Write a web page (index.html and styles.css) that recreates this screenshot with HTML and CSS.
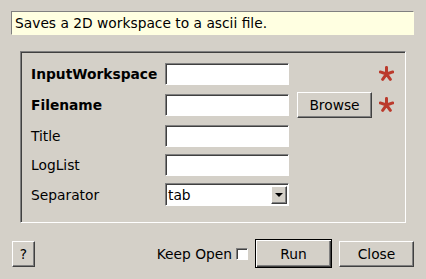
FILE: index.html
```html
<!doctype html>
<html lang="en">
  <head>
    <meta charset="UTF-8" />
    <title>SaveAscii2D</title>
    <link rel="stylesheet" href="styles.css">
  </head>
  <body>
    <div class="dialog">
      <!-- algorithm description -->
      <div class="description">Saves a 2D workspace to a ascii file.</div>

      <!-- properties -->
      <div class="frame">
        <div class="props">
          <div class="prop-label bold">InputWorkspace</div>
          <input class="field" type="text">
          <div></div>
          <div class="star">
            <svg width="16" height="16" viewBox="0 0 16 16"><path d="M8 8L8 1M8 8L14.7 5.8M8 8L12.1 13.7M8 8L3.9 13.7M8 8L1.3 5.8"/></svg>
          </div>

          <div class="prop-label bold">Filename</div>
          <input class="field" type="text">
          <button class="btn browse">Browse</button>
          <div class="star">
            <svg width="16" height="16" viewBox="0 0 16 16"><path d="M8 8L8 1M8 8L14.7 5.8M8 8L12.1 13.7M8 8L3.9 13.7M8 8L1.3 5.8"/></svg>
          </div>

          <div class="prop-label">Title</div>
          <input class="field" type="text">
          <div></div>
          <div></div>

          <div class="prop-label">LogList</div>
          <input class="field" type="text">
          <div></div>
          <div></div>

          <div class="prop-label">Separator</div>
          <div class="combo">
            <span class="combo-text">tab</span>
            <span class="combo-button"><span class="arrow"></span></span>
          </div>
          <div></div>
          <div></div>
        </div>
      </div>

      <!-- buttons -->
      <div class="footer">
        <button class="btn help">?</button>
        <div class="keep-open">
          <span>Keep Open</span>
          <span class="checkbox"></span>
        </div>
        <button class="btn run">Run</button>
        <button class="btn close">Close</button>
      </div>
    </div>
  </body>
</html>
```

FILE: styles.css
```css
* {
  margin: 0;
  padding: 0;
  box-sizing: border-box;
}

body {
  font-family: 'DejaVu Sans', 'Noto Sans', sans-serif;
  font-size: 13.8px;
  background: #d4d0c8;
  color: #000;
}

.dialog {
  width: 426px;
  height: 279px;
  padding-top: 11px;
}

/* description */
.description {
  margin-left: 11px;
  width: 403px;
  height: 24px;
  padding-left: 3px;
  line-height: 22px;
  background: #ffffe1;
  border: 1px solid;
  border-color: #808080 #ffffe1 #ffffe1 #808080;
}

/* property frame */
.frame {
  margin: 16px 0 0 20px;
  width: 386px;
  height: 172px;
  padding: 10px 0 0 10px;
  border: 1px solid;
  border-color: #808080 #fff #fff #808080;
  box-shadow: inset 1px 1px #404040;
}

.props {
  display: grid;
  grid-template-columns: 134px 124px 83px 22px;
  grid-template-rows: 23px 26px 22px 22px 23px;
  row-gap: 7px;
  align-items: center;
}

.prop-label.bold {
  font-weight: bold;
}

.field {
  width: 124px;
  height: 22px;
  background: #fff;
  border: 1px solid;
  border-color: #808080 #fff #fff #808080;
  box-shadow: inset 1px 1px #404040;
  font: inherit;
  padding-left: 3px;
  outline: none;
}

.star {
  display: flex;
  padding-left: 7px;
}

.star path {
  stroke: #bb3a2c;
  stroke-width: 3.2;
  stroke-linecap: round;
  fill: none;
}

.combo {
  width: 124px;
  height: 23px;
  display: flex;
  align-items: center;
  justify-content: space-between;
  background: #fff;
  border: 1px solid;
  border-color: #808080 #fff #fff #808080;
  box-shadow: inset 1px 1px #404040;
  padding: 1px 1px 1px 2px;
}

.combo-button {
  width: 16px;
  height: 18px;
  display: flex;
  align-items: center;
  justify-content: center;
  background: #d4d0c8;
  border: 1px solid;
  border-color: #fff #404040 #404040 #fff;
  box-shadow: inset -1px -1px #808080;
}

.arrow {
  width: 0;
  height: 0;
  border-left: 4px solid transparent;
  border-right: 4px solid transparent;
  border-top: 4px solid #000;
  margin-top: 1px;
}

/* buttons */
.btn {
  font: inherit;
  color: #000;
  background: #d4d0c8;
  border: 1px solid;
  border-color: #fff #404040 #404040 #fff;
  box-shadow: inset -1px -1px #808080;
  cursor: pointer;
}

.browse {
  margin-left: 8px;
  width: 75px;
  height: 26px;
}

.footer {
  display: flex;
  align-items: center;
  margin-top: 16px;
  padding: 0 12px;
  height: 29px;
}

.help {
  width: 23px;
  height: 26px;
}

.keep-open {
  margin-left: auto;
  display: flex;
  align-items: center;
  gap: 4px;
}

.checkbox {
  width: 12px;
  height: 12px;
  background: #fff;
  border: 1px solid;
  border-color: #808080 #fff #fff #808080;
  box-shadow: inset 1px 1px #404040;
}

.run {
  margin-left: 7px;
  width: 77px;
  height: 29px;
  border-color: #000;
  box-shadow: inset 1px 1px #fff, inset -1px -1px #404040, inset -2px -2px #808080;
}

.close {
  margin-left: 7px;
  width: 75px;
  height: 26px;
}
```
